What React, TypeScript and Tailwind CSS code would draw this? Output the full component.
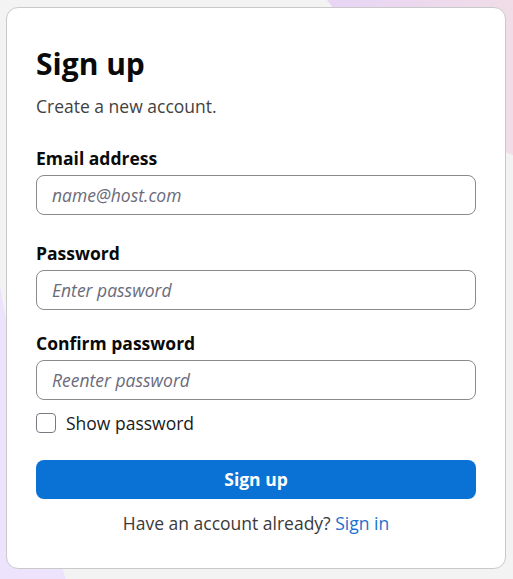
import React, { useState } from 'react'

export default function App() {
  const [show, setShow] = useState(false)

  return (
    <div
      className="relative min-h-[579px] w-full overflow-hidden bg-[#f3f3f3] p-[7px_7px_11px_6px]"
      style={{ fontFamily: '"Open Sans", "Noto Sans", sans-serif' }}
    >
      {/* decorative background blobs */}
      <svg className="pointer-events-none absolute inset-0 h-full w-full" viewBox="0 0 513 579" preserveAspectRatio="none">
        <defs>
          <linearGradient id="tr" x1="0" y1="0" x2="1" y2="0">
            <stop offset="0" stopColor="#e8d5f6" />
            <stop offset="1" stopColor="#f1dde7" />
          </linearGradient>
        </defs>
        <path d="M327 0 C 380 70, 450 130, 513 155 L 513 0 Z" fill="url(#tr)" />
        <path d="M0 285 C 20 400, 40 500, 66 579 L 0 579 Z" fill="#ede3fc" />
      </svg>

      <div className="relative rounded-xl border border-[#c9c9c9] bg-white pl-[29px] pr-[29px] pt-[36px] pb-[33px]">
        <h1 className="text-[30px] leading-[40px] font-bold text-[#0a0a0a]">Sign up</h1>
        <p className="mt-[10px] text-[17.5px] leading-[24px] text-[#424242]">Create a new account.</p>

        <form className="mt-[28px]" onSubmit={(e) => e.preventDefault()}>
          <label className="block text-[17.5px] leading-[24px] font-bold text-[#0a0a0a]">Email address</label>
          <input
            type="email"
            placeholder="name@host.com"
            className="mt-[5px] h-[40px] w-full rounded-lg border border-[#8a8a8a] px-[15px] text-[17.5px] text-[#242424] placeholder:italic placeholder:text-[#6b6b7a] outline-none"
          />

          <label className="mt-[26px] block text-[17.5px] leading-[24px] font-bold text-[#0a0a0a]">Password</label>
          <input
            type={show ? 'text' : 'password'}
            placeholder="Enter password"
            className="mt-[5px] h-[40px] w-full rounded-lg border border-[#8a8a8a] px-[15px] text-[17.5px] text-[#242424] placeholder:italic placeholder:text-[#6b6b7a] outline-none"
          />

          <label className="mt-[21px] block text-[17.5px] leading-[24px] font-bold text-[#0a0a0a]">Confirm password</label>
          <input
            type={show ? 'text' : 'password'}
            placeholder="Reenter password"
            className="mt-[5px] h-[40px] w-full rounded-lg border border-[#8a8a8a] px-[15px] text-[17.5px] text-[#242424] placeholder:italic placeholder:text-[#6b6b7a] outline-none"
          />

          <label className="mt-[11px] flex items-center gap-[10px] text-[17.5px] leading-[24px] text-[#1a1a1a]">
            <input
              type="checkbox"
              checked={show}
              onChange={(e) => setShow(e.target.checked)}
              className="h-[20px] w-[20px] appearance-none rounded-[4px] border border-[#7a7a85] bg-white"
            />
            Show password
          </label>

          <button
            type="submit"
            className="mt-[25px] h-[39px] w-full rounded-lg bg-[#0b72d5] text-[17.5px] font-bold text-white"
          >
            Sign up
          </button>

          <p className="mt-[12px] text-center text-[17.5px] leading-[24px] text-[#3a3a3a]">
            Have an account already? <a href="#" className="text-[#1b6fce]">Sign in</a>
          </p>
        </form>
      </div>
    </div>
  )
}
